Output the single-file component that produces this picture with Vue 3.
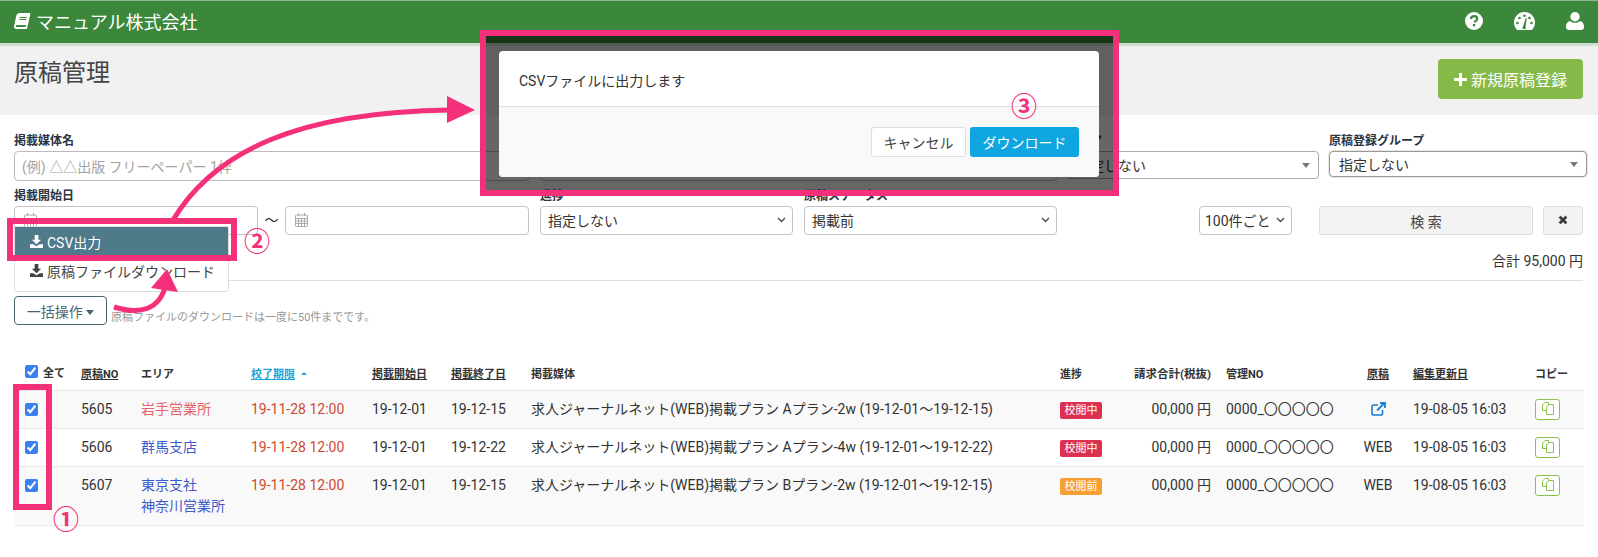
<script setup>
const rows = [
  { id: 5605, area: ['岩手営業所'], areaClass: 'area-red', end: '19-12-15', plan: 'Aプラン-2w (19-12-01〜19-12-15)', status: '校閲中', statusClass: 'badge-red', web: false },
  { id: 5606, area: ['群馬支店'], areaClass: '', end: '19-12-22', plan: 'Aプラン-4w (19-12-01〜19-12-22)', status: '校閲中', statusClass: 'badge-red', web: true },
  { id: 5607, area: ['東京支社', '神奈川営業所'], areaClass: '', end: '19-12-15', plan: 'Bプラン-2w (19-12-01〜19-12-15)', status: '校閲前', statusClass: 'badge-orange', web: true }
]
const colWidths = [67, 60, 110, 121, 79, 80, 529, 60, 106, 117, 70, 122, 49]
</script>

<template>
  <div class="page">
    <header class="nav">
      <div class="brand">
        <svg class="book" viewBox="0 0 448 512"><path d="M448 360V24c0-13.300-10.700-24-24-24H96C43 0 0 43 0 96v320c0 53 43 96 96 96h328c13.300 0 24-10.700 24-24v-16c0-7.500-3.500-14.300-8.900-18.700-4.200-15.400-4.200-59.300 0-74.700 5.400-4.300 8.900-11.100 8.900-18.600zM128 134c0-3.300 2.700-6 6-6h212c3.300 0 6 2.700 6 6v20c0 3.300-2.700 6-6 6H134c-3.300 0-6-2.700-6-6v-20zm0 64c0-3.300 2.700-6 6-6h212c3.300 0 6 2.700 6 6v20c0 3.300-2.700 6-6 6H134c-3.300 0-6-2.700-6-6v-20zm253.400 250H96c-17.700 0-32-14.300-32-32 0-17.600 14.400-32 32-32h285.400c-1.900 17.100-1.900 46.900 0 64z"/></svg>
        <span>マニュアル株式会社</span>
      </div>
      <div class="nav-icons">
        <svg width="18" height="18" viewBox="0 0 18 18"><circle cx="9" cy="9" r="9" fill="#fff"/><path d="M5.900 7c.2-1.900 1.500-2.900 3.200-2.900 1.800 0 3.100 1.100 3.100 2.600 0 1.300-.8 1.900-1.600 2.400-.6.400-.9.700-.9 1.300" fill="none" stroke="#3b873b" stroke-width="2.200"/><rect x="7.900" y="12" width="2.300" height="2.300" fill="#3b873b"/></svg>
        <svg width="21" height="18" viewBox="0 0 21 18"><path d="M10.500 0C4.700 0 0 4.700 0 10.500c0 2.700 1 5.200 2.700 7.100.2.300.5.400.8.400h14c.3 0 .6-.1.800-.4 1.700-1.900 2.700-4.400 2.700-7.100C21 4.700 16.300 0 10.500 0z" fill="#fff"/><g fill="#3b873b"><circle cx="3.500" cy="11" r="1.300"/><circle cx="5.500" cy="6" r="1.300"/><circle cx="10.500" cy="3.800" r="1.300"/><circle cx="15.500" cy="6" r="1.300"/><circle cx="17.500" cy="11" r="1.300"/><path d="M9 14.500l2.800-8.500 1 .3-1.400 8.700c.5.500.6 1.200.3 1.900H8.800c-.4-.9-.3-1.800.2-2.400z"/></g></svg>
        <svg width="18" height="18" viewBox="0 0 18 18" fill="#fff"><circle cx="9" cy="4.700" r="4.700"/><path d="M0 15c0-4 1.800-5.800 4.500-5.800 1.200 1 2.800 1.600 4.500 1.600s3.300-.6 4.500-1.600C16.200 9.200 18 11 18 15c0 1.900-1.200 3-3 3H3c-1.800 0-3-1.100-3-3z"/></svg>
      </div>
    </header>

    <section class="page-head">
      <h1>原稿管理</h1>
      <button class="btn-new">
        <svg width="13" height="13" viewBox="0 0 13 13"><path d="M5 0h3v5h5v3H8v5H5V8H0V5h5z" fill="#fff"/></svg>
        新規原稿登録
      </button>
    </section>

    <main class="content">
      <div class="filter-row">
        <div class="field w-515">
          <label>掲載媒体名</label>
          <div class="control placeholder">(例) △△出版 フリーペーパー 1枠</div>
        </div>
        <div class="field w-517">
          <label>掲載媒体</label>
          <div class="control placeholder">指定しない</div>
        </div>
        <div class="field w-253">
          <label>エリア</label>
          <div class="control select-solid h-28">指定しない<i class="tri"></i></div>
        </div>
        <div class="field w-258">
          <label>原稿登録グループ</label>
          <div class="control select-solid h-26 strong">指定しない<i class="tri"></i></div>
        </div>
      </div>

      <div class="filter-row second">
        <div class="field w-244">
          <label>掲載開始日</label>
          <div class="control date">
            <svg width="13" height="14" viewBox="0 0 13 14" fill="none" stroke="#aaa"><rect x=".5" y="2" width="12" height="11.500" rx="1"/><path d="M.5 5.500h12M.5 8h12M.5 10.500h12M3.500 5.500v8M6.500 5.500v8M9.500 5.500v8M3.500 0v3M9.500 0v3"/></svg>
          </div>
        </div>
        <span class="tilde">〜</span>
        <div class="field w-244">
          <label>&nbsp;</label>
          <div class="control date">
            <svg width="13" height="14" viewBox="0 0 13 14" fill="none" stroke="#aaa"><rect x=".5" y="2" width="12" height="11.500" rx="1"/><path d="M.5 5.500h12M.5 8h12M.5 10.500h12M3.500 5.500v8M6.500 5.500v8M9.500 5.500v8M3.500 0v3M9.500 0v3"/></svg>
          </div>
        </div>
        <div class="field w-253 ml-11">
          <label>進捗</label>
          <div class="control select-line">指定しない
            <svg width="9" height="6" viewBox="0 0 9 6" fill="none" stroke="#444" stroke-width="1.300"><path d="M1 1l3.500 3.500L8 1"/></svg>
          </div>
        </div>
        <div class="field w-253 ml-11">
          <label>原稿ステータス</label>
          <div class="control select-line">掲載前
            <svg width="9" height="6" viewBox="0 0 9 6" fill="none" stroke="#444" stroke-width="1.300"><path d="M1 1l3.500 3.500L8 1"/></svg>
          </div>
        </div>
        <div class="search-tools">
          <div class="control select-line per-page">100件ごと
            <svg width="9" height="6" viewBox="0 0 9 6" fill="none" stroke="#444" stroke-width="1.300"><path d="M1 1l3.500 3.500L8 1"/></svg>
          </div>
          <button class="btn-search">検 索</button>
          <button class="btn-clear">
            <svg width="10" height="10" viewBox="0 0 10 10"><path d="M1 2.600L2.600 1 5 3.400 7.400 1 9 2.600 6.600 5 9 7.400 7.400 9 5 6.600 2.600 9 1 7.400 3.400 5z" fill="#333" stroke="#333" stroke-width=".6"/></svg>
          </button>
        </div>
      </div>

      <div class="total">合計 95,000 円</div>
      <hr class="rule" />

      <div class="bulk-row">
        <div class="bulk">
          <div class="dropdown">
            <div class="dropdown-item active">
              <svg class="dl" viewBox="0 0 14 14"><path d="M5 0h4v5h3L7 10 2 5h3zM0 10h3.500L7 12l3.500-2H14v4H0z" fill="currentColor"/></svg>
              CSV出力
            </div>
            <div class="dropdown-item second-item">
              <svg class="dl" viewBox="0 0 14 14"><path d="M5 0h4v5h3L7 10 2 5h3zM0 10h3.500L7 12l3.500-2H14v4H0z" fill="currentColor"/></svg>
              原稿ファイルダウンロード
            </div>
          </div>
          <button class="btn-bulk">一括操作 <i class="tri dark"></i></button>
        </div>
        <span class="hint">原稿ファイルのダウンロードは一度に50件までです。</span>
      </div>

      <table class="list">
        <colgroup>
          <col v-for="(w, i) in colWidths" :key="i" :style="{ width: w + 'px' }" />
        </colgroup>
        <thead>
          <tr>
            <th class="check-cell"><label class="all"><input type="checkbox" checked /> 全て</label></th>
            <th><u>原稿NO</u></th>
            <th>エリア</th>
            <th class="sorted"><u>校了期限</u> <i class="caret"></i></th>
            <th><u>掲載開始日</u></th>
            <th><u>掲載終了日</u></th>
            <th>掲載媒体</th>
            <th>進捗</th>
            <th class="amount">請求合計(税抜)</th>
            <th>管理NO</th>
            <th class="center"><u>原稿</u></th>
            <th><u>編集更新日</u></th>
            <th>コピー</th>
          </tr>
        </thead>
        <tbody>
          <tr v-for="row in rows" :key="row.id">
            <td class="check-cell"><input type="checkbox" checked /></td>
            <td>{{ row.id }}</td>
            <td :class="['area', row.areaClass]"><div v-for="a in row.area" :key="a">{{ a }}</div></td>
            <td class="due">19-11-28 12:00</td>
            <td>19-12-01</td>
            <td>{{ row.end }}</td>
            <td>求人ジャーナルネット(WEB)掲載プラン {{ row.plan }}</td>
            <td><span :class="['badge', row.statusClass]">{{ row.status }}</span></td>
            <td class="amount">00,000 円</td>
            <td>0000_〇〇〇〇〇</td>
            <td class="center">
              <template v-if="row.web">WEB</template>
              <svg v-else class="ext" width="15" height="14" viewBox="0 0 15 14" fill="none" stroke="#1b7fd1" stroke-width="1.600"><path d="M11.500 8v3.200c0 1-.7 1.800-1.800 1.800H2.800C1.700 13 1 12.200 1 11.200V4.800C1 3.800 1.700 3 2.800 3H7"/><path d="M6 8.500L13 1.500M9 1h5v5" stroke-width="1.800"/></svg>
            </td>
            <td>19-08-05 16:03</td>
            <td>
              <button class="btn-copy">
                <svg width="12" height="13" viewBox="0 0 12 13" stroke="#8bc34a"><path d="M.5 3L3 .5h3.500v8H.5z" fill="none"/><path d="M4.500 5L7 2.500h4.500v10h-7z" fill="#fff"/></svg>
              </button>
            </td>
          </tr>
        </tbody>
      </table>
    </main>

    <!-- 説明用の注釈レイヤー -->
    <div class="callout callout-modal">
      <div class="modal">
        <div class="modal-body">CSVファイルに出力します</div>
        <div class="modal-foot">
          <button class="btn-cancel">キャンセル</button>
          <button class="btn-download">ダウンロード</button>
        </div>
      </div>
    </div>
    <div class="callout callout-csv"></div>
    <div class="callout callout-checks"></div>
    <span class="num num-1">①</span>
    <span class="num num-2">②</span>
    <span class="num num-3">③</span>

    <svg class="arrows" width="1598" height="557" viewBox="0 0 1598 557">
      <path d="M173 220C215 150 300 112 450 110" fill="none" stroke="#f5307a" stroke-width="5" />
      <path d="M447 96L475 110 447 123z" fill="#f5307a" />
      <path d="M114 307C140 315 160 310 166 284" fill="none" stroke="#f5307a" stroke-width="5" />
      <path d="M167 269L151 288 178 292z" fill="#f5307a" />
    </svg>
  </div>
</template>

<style scoped>
.page {
  position: relative;
  width: 1598px;
  height: 557px;
  overflow: hidden;
  background: #fff;
  color: #333;
  font-size: 14px;
}
button {
  font-family: inherit;
  cursor: pointer;
}
.nav {
  height: 40px;
  box-sizing: content-box;
  display: flex;
  align-items: center;
  justify-content: space-between;
  padding: 0 14px 2px;
  background: #3b873b;
  border-top: 1px solid #8fb78f;
  border-bottom: 3px solid #cfdfcf;
  color: #fff;
}
.brand {
  display: flex;
  align-items: center;
  gap: 7px;
  font-size: 18px;
}
.book {
  width: 14px;
  height: 16px;
  margin-left: 1px;
  fill: #fff;
  transform: skewX(-12deg);
}
.nav-icons {
  display: flex;
  align-items: center;
  gap: 31px;
}
.page-head {
  height: 69px;
  box-sizing: border-box;
  display: flex;
  justify-content: space-between;
  align-items: flex-start;
  padding: 13px 15px 0 14px;
  background: #f1f1f1;
}
.page-head h1 {
  margin: 0;
  font-size: 24px;
  font-weight: 400;
  line-height: 28px;
  color: #444;
}
.btn-new {
  width: 145px;
  height: 40px;
  border: none;
  border-radius: 4px;
  background: #85ba48;
  color: #fff;
  font-size: 16px;
}
.content {
  padding: 19px 11px 0 14px;
}
.filter-row {
  display: flex;
  align-items: flex-end;
}
.filter-row.second {
  margin-top: 8px;
}
.field label {
  display: block;
  height: 14px;
  margin-bottom: 3px;
  font-size: 12px;
  font-weight: 700;
  line-height: 14px;
  color: #2b3340;
}
.w-515 { width: 515px; margin-right: 11px; }
.w-517 { width: 517px; margin-right: 9px; }
.w-253 { width: 253px; }
.w-258 { width: 258px; margin-left: 10px; }
.w-244 { width: 244px; }
.ml-11 { margin-left: 11px; }
.control {
  display: flex;
  align-items: center;
  justify-content: space-between;
  box-sizing: border-box;
  height: 30px;
  padding: 0 6px 1px 7px;
  border: 1px solid #bbb;
  border-radius: 4px;
  background: #fff;
  font-size: 14px;
  white-space: nowrap;
}
.placeholder {
  color: #a3a3a3;
}
.select-solid {
  padding: 0 8px 0 9px;
  border-color: #aaa;
}
.h-28 { height: 28px; margin-bottom: 2px; }
.h-26 { height: 26px; margin-bottom: 4px; }
.strong { border: 1px solid #999; box-shadow: 0 0 0 1px #e8e8e8; }
.tri {
  display: inline-block;
  width: 0;
  height: 0;
  border-left: 4px solid transparent;
  border-right: 4px solid transparent;
  border-top: 5px solid #777;
}
.tri.dark {
  border-top-color: #47656f;
  vertical-align: 2px;
}
.date {
  justify-content: flex-start;
  height: 29px;
  padding-left: 9px;
  border-color: #c4c4c4;
}
.select-line {
  height: 29px;
  border-color: #c4c4c4;
}
.tilde {
  width: 27px;
  height: 29px;
  line-height: 29px;
  text-align: center;
  font-size: 14px;
}
.search-tools {
  display: flex;
  gap: 10px;
  margin-left: 142px;
}
.per-page {
  width: 93px;
  padding-left: 5px;
  margin-right: 17px;
}
.btn-search {
  width: 214px;
  height: 29px;
  border: 1px solid #ddd;
  border-radius: 3px;
  background: #f3f3f3;
  color: #444;
  font-size: 14px;
}
.btn-clear {
  width: 40px;
  height: 29px;
  border: 1px solid #ddd;
  border-radius: 3px;
  background: #f3f3f3;
}
.total {
  margin-top: 16px;
  padding-right: 4px;
  line-height: 20px;
  text-align: right;
}
.rule {
  width: 1569px;
  margin: 9px 0 15px;
  border: none;
  border-top: 1px solid #ddd;
}
.bulk-row {
  display: flex;
  align-items: flex-end;
  gap: 4px;
  height: 29px;
}
.bulk {
  position: relative;
}
.btn-bulk {
  display: block;
  width: 93px;
  height: 29px;
  padding: 0;
  border: 1px solid #47656f;
  border-radius: 4px;
  background: #fff;
  color: #47656f;
  font-size: 14px;
}
.dropdown {
  position: absolute;
  left: 0;
  bottom: 33px;
  width: 215px;
  box-sizing: border-box;
  border: 1px solid #ddd;
  border-radius: 3px;
  background: #fff;
}
.dropdown-item {
  display: flex;
  align-items: center;
  gap: 4px;
  box-sizing: border-box;
  padding-left: 15px;
  color: #444;
  white-space: nowrap;
}
.dropdown-item.active {
  height: 29px;
  background: #4e7a8a;
  color: #fff;
}
.second-item {
  height: 35px;
  padding-bottom: 6px;
}
.dl {
  width: 13px;
  height: 13px;
}
.hint {
  font-size: 11px;
  line-height: 14px;
  color: #999;
}
.list {
  width: 1570px;
  margin-top: 30px;
  table-layout: fixed;
  border-collapse: collapse;
}
.list th {
  height: 35px;
  padding: 0;
  border-bottom: 1px solid #e8e8e8;
  font-size: 11px;
  font-weight: 700;
  text-align: left;
  color: #333;
}
.list td {
  padding: 8px 0;
  border-bottom: 1px solid #e8e8e8;
  line-height: 21px;
  vertical-align: top;
  white-space: nowrap;
}
.list tbody tr:nth-child(odd) {
  background: #f9f9f9;
}
.check-cell {
  padding-left: 11px !important;
}
input[type='checkbox'] {
  width: 13px;
  height: 13px;
  margin: 0;
  vertical-align: -2px;
  accent-color: #3a80f0;
}
.all {
  display: inline-flex;
  align-items: center;
  gap: 5px;
}
.sorted u {
  color: #1ca3d8;
}
.caret {
  display: inline-block;
  width: 0;
  height: 0;
  margin-left: 3px;
  vertical-align: 3px;
  border-left: 3px solid transparent;
  border-right: 3px solid transparent;
  border-bottom: 3px solid #1ca3d8;
}
.area {
  color: #3d5bc9;
}
.area-red {
  color: #e8626e;
}
.due {
  color: #d0492f;
}
.list th.amount,
.list td.amount {
  padding-right: 15px;
  text-align: right;
}
.list th.amount {
  font-size: 11.500px;
}
.list th.center,
.list td.center {
  text-align: center;
}
.ext {
  vertical-align: -2px;
}
.badge {
  display: inline-block;
  width: 42px;
  height: 17px;
  margin-top: 3px;
  border-radius: 2px;
  font-size: 11px;
  line-height: 17px;
  text-align: center;
  color: #fff;
  vertical-align: top;
}
.badge-red { background: #dc3050; }
.badge-orange { background: #f5a030; }
.btn-copy {
  display: block;
  width: 25px;
  height: 21px;
  padding: 0;
  border: 1px solid #8bc34a;
  border-radius: 3px;
  background: #fff;
  line-height: 1;
}
.callout {
  position: absolute;
  box-sizing: border-box;
  border: 6px solid #f5307a;
}
.callout-modal {
  left: 480px;
  top: 30px;
  width: 639px;
  height: 166px;
  padding: 15px 0 0 13px;
  background: rgba(0, 0, 0, 0.6);
}
.callout-csv {
  left: 7px;
  top: 218px;
  width: 230px;
  height: 43px;
}
.callout-checks {
  left: 13px;
  top: 384px;
  width: 39px;
  height: 126px;
}
.modal {
  width: 600px;
  height: 126px;
  border-radius: 4px;
  overflow: hidden;
  background: #fff;
}
.modal-body {
  height: 56px;
  box-sizing: border-box;
  padding: 20px 20px 0;
  border-bottom: 1px solid #ddd;
  line-height: 20px;
}
.modal-foot {
  display: flex;
  justify-content: flex-end;
  gap: 4px;
  height: 70px;
  box-sizing: border-box;
  padding: 20px 20px 0;
  background: #f9f9f9;
}
.btn-cancel,
.btn-download {
  height: 30px;
  border-radius: 3px;
  font-size: 14px;
}
.btn-cancel {
  width: 95px;
  border: 1px solid #ddd;
  background: #fff;
  color: #444;
}
.btn-download {
  width: 109px;
  border: none;
  background: #0ea5e0;
  color: #fff;
}
.num {
  position: absolute;
  width: 28px;
  height: 28px;
  line-height: 28px;
  text-align: center;
  font-size: 26px;
  font-weight: 700;
  color: #f5307a;
}
.num-1 { left: 52px; top: 506px; }
.num-2 { left: 243px; top: 228px; }
.num-3 { left: 1010px; top: 93px; }
.arrows {
  position: absolute;
  left: 0;
  top: 0;
  pointer-events: none;
}
</style>

<style>
body {
  font-family: Roboto, "Noto Sans CJK JP", sans-serif;
}
</style>
